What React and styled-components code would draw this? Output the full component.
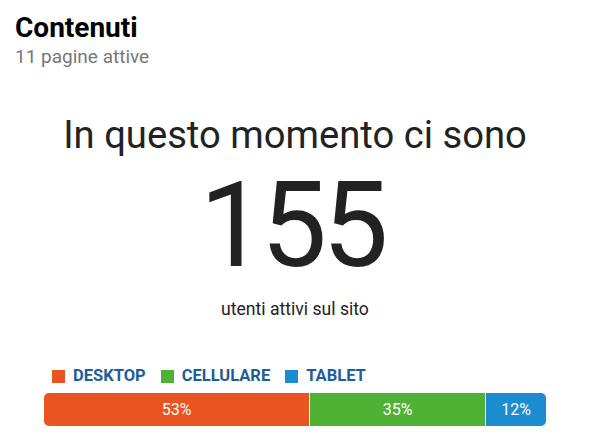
import React from 'react';
import styled, { createGlobalStyle } from 'styled-components';

const GlobalStyle = createGlobalStyle`
  body {
    margin: 0;
    background: #ffffff;
    font-family: Roboto, "Liberation Sans", sans-serif;
  }
`;

const devices = [
  { label: 'DESKTOP', value: 53, color: '#ea5420' },
  { label: 'CELLULARE', value: 35, color: '#4fb234' },
  { label: 'TABLET', value: 12, color: '#1a8ccf' },
];

export default function App() {
  return (
    <>
      <GlobalStyle />
      <Card>
        <Header>
          <Title>Contenuti</Title>
          <Subtitle>11 pagine attive</Subtitle>
        </Header>
        <Main>
          <Lead>In questo momento ci sono</Lead>
          <Count>155</Count>
          <Caption>utenti attivi sul sito</Caption>
        </Main>
        <Breakdown>
          <Legend>
            {devices.map((d) => (
              <LegendItem key={d.label}>
                <Swatch $color={d.color} />
                {d.label}
              </LegendItem>
            ))}
          </Legend>
          <Bar>
            {devices.map((d) => (
              <Segment key={d.label} $color={d.color} style={{ flexGrow: d.value }}>
                {d.value}%
              </Segment>
            ))}
          </Bar>
        </Breakdown>
      </Card>
    </>
  );
}

const Card = styled.div`
  width: 602px;
  height: 443px;
  box-sizing: border-box;
  padding: 12px 27px 0 15px;
  display: flex;
  flex-direction: column;
`;

const Header = styled.div`
  display: flex;
  flex-direction: column;
`;

const Title = styled.h1`
  margin: 0;
  font-size: 28px;
  line-height: 32px;
  font-weight: 700;
  color: #000;
`;

const Subtitle = styled.div`
  margin-top: 2px;
  font-size: 19px;
  line-height: 22px;
  color: #777;
`;

const Main = styled.div`
  display: flex;
  flex-direction: column;
  align-items: center;
  color: #222;
  margin-top: 45px;
`;

const Lead = styled.div`
  font-size: 38.2px;
  line-height: 44px;
`;

const Count = styled.div`
  font-size: 118px;
  line-height: 120px;
  letter-spacing: -5px;
  margin-top: 9px;
  padding-right: 7px;
`;

const Caption = styled.div`
  font-size: 17.6px;
  line-height: 20px;
  margin-top: 13px;
`;

const Breakdown = styled.div`
  margin: 47px 29px 0;
  display: flex;
  flex-direction: column;
`;

const Legend = styled.div`
  display: flex;
  gap: 15px;
  padding-left: 8px;
`;

const LegendItem = styled.div`
  display: flex;
  align-items: center;
  gap: 8px;
  font-size: 16.5px;
  line-height: 20px;
  font-weight: 700;
  color: #1d5d9b;
`;

const Swatch = styled.span`
  width: 13px;
  height: 13px;
  background: ${(p) => p.$color};
`;

const Bar = styled.div`
  margin-top: 7px;
  display: flex;
  gap: 1px;
  height: 33px;
  border-radius: 5px;
  overflow: hidden;
`;

const Segment = styled.div`
  flex-basis: 0;
  display: flex;
  align-items: center;
  justify-content: center;
  background: ${(p) => p.$color};
  color: #fff;
  font-size: 16px;
`;
